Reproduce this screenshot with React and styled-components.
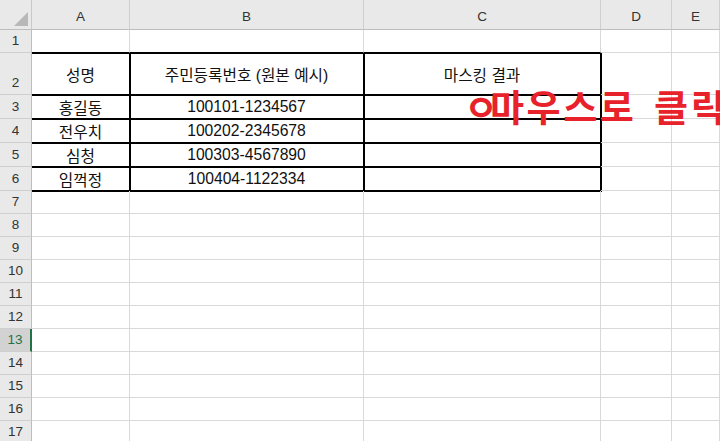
import React from "react";
import styled, { createGlobalStyle } from "styled-components";

const GlobalStyle = createGlobalStyle`
  html, body {
    margin: 0;
    padding: 0;
    background: #ffffff;
    overflow: hidden;
  }
`;

const columns = [
  { key: "A", width: "98px" },
  { key: "B", width: "234px" },
  { key: "C", width: "237px" },
  { key: "D", width: "71px" },
  { key: "E", width: "1fr" },
];

// row heights in px, index 0 = row 1
const rowHeights = [23, 42, 24, 24, 24, 24, 23, 23, 23, 23, 23, 23, 23, 23, 23, 23, 23];

const table = {
  2: ["성명", "주민등록번호 (원본 예시)", "마스킹 결과"],
  3: ["홍길동", "100101-1234567", ""],
  4: ["전우치", "100202-2345678", ""],
  5: ["심청", "100303-4567890", ""],
  6: ["임꺽정", "100404-1122334", ""],
};

const activeRow = 13;

const SheetWrap = styled.div`
  position: relative;
  width: 720px;
  height: 441px;
  overflow: hidden;
`;

const Sheet = styled.div`
  display: grid;
  grid-template-columns: 32px ${columns.map((c) => c.width).join(" ")};
  grid-template-rows: 30px ${rowHeights.map((h) => h + "px").join(" ")};
  font-family: "Liberation Sans", "Noto Sans CJK KR", sans-serif;
`;

const Corner = styled.div`
  position: relative;
  background: #e9e9e9;
  border-right: 1px solid #c9c9c9;
  border-bottom: 1px solid #bdbdbd;
  box-sizing: border-box;

  &::after {
    content: "";
    position: absolute;
    right: 3px;
    bottom: 3px;
    width: 0;
    height: 0;
    border-left: 14px solid transparent;
    border-bottom: 14px solid #b8b8b8;
  }
`;

const ColHead = styled.div`
  display: flex;
  align-items: center;
  justify-content: center;
  padding-top: 3px;
  box-sizing: border-box;
  background: #e9e9e9;
  border-right: 1px solid #cfcfcf;
  border-bottom: 1px solid #bdbdbd;
  font-size: 13.5px;
  color: #333;
`;

const RowHead = styled.div`
  display: flex;
  align-items: flex-end;
  justify-content: center;
  padding-bottom: 2px;
  box-sizing: border-box;
  background: ${(p) => (p.$active ? "#d2d2d2" : "#e9e9e9")};
  color: ${(p) => (p.$active ? "#217346" : "#333")};
  border-bottom: 1px solid #cfcfcf;
  border-right: ${(p) => (p.$active ? "2px solid #217346" : "1px solid #bdbdbd")};
  font-size: 13.5px;
  line-height: 18px;
`;

const Cell = styled.div`
  position: relative;
  display: flex;
  align-items: center;
  justify-content: center;
  box-sizing: border-box;
  border-right: 1px solid ${(p) => (p.$thickRight ? "#000" : "#d9d9d9")};
  border-bottom: 1px solid ${(p) => (p.$thickBottom ? "#000" : "#d9d9d9")};
  box-shadow: ${(p) =>
    [
      p.$thickRight && "1px 0 0 #000",
      p.$thickBottom && "0 1px 0 #000",
      p.$thickRight && p.$thickBottom && "1px 1px 0 #000",
    ]
      .filter(Boolean)
      .join(", ") || "none"};
  font-size: 15.7px;
  color: #111;
  white-space: nowrap;
  padding-top: 1px;
`;

const Callout = styled.div`
  position: absolute;
  left: 464px;
  top: 90px;
  font-family: "Noto Sans CJK KR", sans-serif;
  font-weight: 700;
  font-size: 37px;
  line-height: 32px;
  letter-spacing: 2.5px;
  word-spacing: 7px;
  color: #e8222b;
  white-space: nowrap;
`;

const Jamo = styled.span`
  letter-spacing: -8px;
`;

export default function App() {
  const rows = rowHeights.map((h, i) => i + 1);

  return (
    <SheetWrap>
      <GlobalStyle />
      <Sheet>
        <Corner />
        {columns.map((c) => (
          <ColHead key={c.key}>{c.key}</ColHead>
        ))}
        {rows.map((r) => (
          <React.Fragment key={r}>
            <RowHead $active={r === activeRow}>{r}</RowHead>
            {columns.map((c, ci) => {
              const inTable = r >= 2 && r <= 6 && ci < 3;
              const aboveTable = r === 1 && ci < 3;
              return (
                <Cell
                  key={c.key}
                  $thickRight={inTable}
                  $thickBottom={inTable || aboveTable}
                >
                  {inTable ? table[r][ci] : ""}
                </Cell>
              );
            })}
          </React.Fragment>
        ))}
      </Sheet>
      <Callout>
        <Jamo>ㅇ</Jamo>마우스로 클릭
      </Callout>
    </SheetWrap>
  );
}
